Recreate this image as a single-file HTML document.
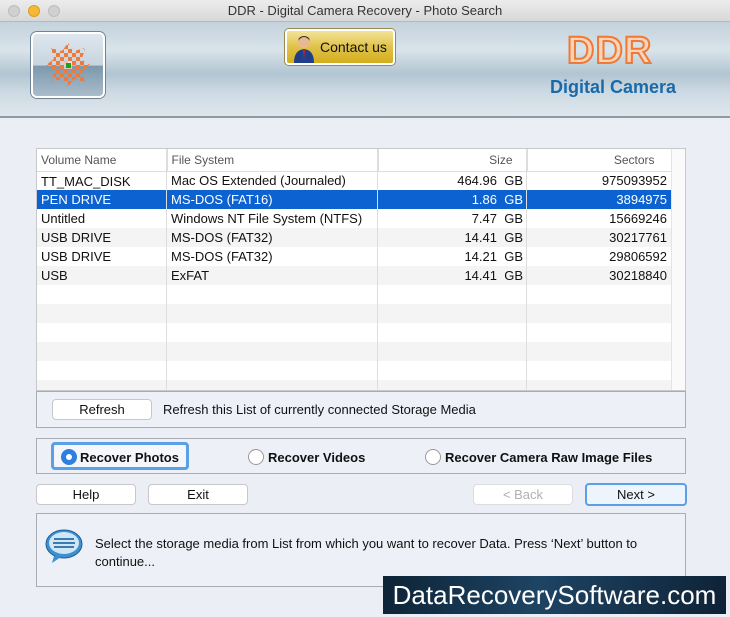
<!DOCTYPE html>
<html><head><meta charset="utf-8"><style>
*{margin:0;padding:0;box-sizing:border-box}
body{width:730px;height:617px;overflow:hidden;background:#eceef5;font-family:"Liberation Sans",sans-serif;font-size:13px;color:#111;position:relative}
.a{position:absolute}
.title{left:0;top:0;width:730px;height:22px;background:linear-gradient(#ececec,#d8d8d8);border-bottom:1px solid #b8b8b8;text-align:center;line-height:22px;font-size:13px;color:#333}
.dot{top:5px;width:12px;height:12px;border-radius:50%;background:#d0d0d0;border:1px solid #bcbcbc}
.hdr{left:0;top:22px;width:730px;height:96px;background:linear-gradient(180deg,#c3d2dc 0%,#d9e3ea 30%,#b2c5d2 55%,#cddae3 75%,#dfe6ec 100%);border-bottom:2px solid #8f9aa2}
.box{border:1px solid #a8acb4;background:#eef0f7}
.btn{background:#fff;border:1px solid #c8c8cc;border-radius:4px;text-align:center;line-height:19px;font-size:13px}
table{border-collapse:collapse;font-size:13px}
td{height:19px;padding:0 4px;white-space:nowrap}
.r{text-align:right}
</style></head><body>
<div class="a title">DDR - Digital Camera Recovery - Photo Search</div>
<div class="a dot" style="left:8px"></div>
<div class="a dot" style="left:28px;background:#f5b935;border-color:#d99f20"></div>
<div class="a dot" style="left:48px"></div>
<div class="a hdr"></div>
<div class="a" style="left:31px;top:32px;width:74px;height:66px;border:2px solid #fff;border-radius:6px;background:linear-gradient(#dfe7ee 0%,#c7d4de 50%,#7d99ad 52%,#a9bccb 100%);box-shadow:0 0 0 1px #6f8496"></div>
<svg class="a" style="left:44px;top:41px" width="48" height="48" viewBox="0 0 48 48">
<defs><pattern id="p" x="0" y="0" width="8" height="8" patternUnits="userSpaceOnUse"><rect width="4" height="4" fill="#f07a3c"/><rect x="4" y="4" width="4" height="4" fill="#f07a3c"/></pattern></defs>
<polygon points="24,2 30,10 41,7 38,18 46,24 38,30 41,41 30,38 24,46 18,38 7,41 10,30 2,24 10,18 7,7 18,10" fill="url(#p)"/>
<rect x="20" y="20" width="8" height="8" fill="#fff" opacity="0.5"/>
<rect x="22" y="22" width="5" height="5" fill="#1ea01e"/></svg>
<div class="a" style="left:285px;top:29px;width:110px;height:36px;border:2px solid #fff;border-radius:4px;background:linear-gradient(#f3e39a,#e0c24a 50%,#d3ae1c);box-shadow:0 0 0 1px #9a8a50"></div>
<svg class="a" style="left:292px;top:33px" width="24" height="30" viewBox="0 0 24 30"><circle cx="12" cy="9" r="6" fill="#e8b890"/><path d="M6 8 Q12 0 18 8 L17 5 Q12 1 7 5Z" fill="#333"/><path d="M2 30 Q2 17 12 16 Q22 17 22 30Z" fill="#1f3f8a"/><path d="M11 17 L12 27 L13 17Z" fill="#c22"/></svg>
<div class="a" style="left:320px;top:39px;font-size:14px;color:#111">Contact us</div>
<div class="a" style="left:567px;top:30px;font-size:38px;font-weight:bold;color:#fbd3b8;-webkit-text-stroke:2px #ee7a35;letter-spacing:1px">DDR</div>
<div class="a" style="left:550px;top:77px;font-size:18px;font-weight:bold;color:#1a6aaa">Digital Camera</div>

<div class="a" style="left:36px;top:148px;width:650px;height:243px;background:#fff;border:1px solid #c8c8cc;overflow:hidden">
<table style="width:634px;table-layout:fixed;color:#111">
<colgroup><col style="width:130px"><col style="width:211px"><col style="width:149px"><col style="width:144px"></colgroup>
<tr style="color:#555;font-size:12px;height:22px;border-bottom:1px solid #ddd"><td style="height:22px;border-right:1px solid #ddd">Volume Name</td><td style="border-right:1px solid #ddd">File System</td><td class="r" style="padding-right:14px;border-right:1px solid #ddd">Size</td><td class="r" style="padding-right:16px;border-right:1px solid #ddd">Sectors</td></tr>
<tr><td style="padding-top:1px">TT_MAC_DISK</td><td>Mac OS Extended (Journaled)</td><td class="r">464.96&nbsp; GB</td><td class="r">975093952</td></tr>
<tr style="background:#0b62d0;color:#fff"><td>PEN DRIVE</td><td>MS-DOS (FAT16)</td><td class="r">1.86&nbsp; GB</td><td class="r">3894975</td></tr>
<tr><td>Untitled</td><td>Windows NT File System (NTFS)</td><td class="r">7.47&nbsp; GB</td><td class="r">15669246</td></tr>
<tr style="background:#f4f4f4"><td>USB DRIVE</td><td>MS-DOS (FAT32)</td><td class="r">14.41&nbsp; GB</td><td class="r">30217761</td></tr>
<tr><td>USB DRIVE</td><td>MS-DOS (FAT32)</td><td class="r">14.21&nbsp; GB</td><td class="r">29806592</td></tr>
<tr style="background:#f4f4f4"><td>USB</td><td>ExFAT</td><td class="r">14.41&nbsp; GB</td><td class="r">30218840</td></tr>
<tr><td></td><td></td><td></td><td></td></tr>
<tr style="background:#f4f4f4"><td></td><td></td><td></td><td></td></tr>
<tr><td></td><td></td><td></td><td></td></tr>
<tr style="background:#f4f4f4"><td></td><td></td><td></td><td></td></tr>
<tr><td></td><td></td><td></td><td></td></tr>
<tr style="background:#f4f4f4"><td></td><td></td><td></td><td></td></tr>
</table>
<div class="a" style="left:129px;top:0;width:1px;height:243px;background:#ddd"></div>
<div class="a" style="left:340px;top:0;width:1px;height:243px;background:#ddd"></div>
<div class="a" style="left:489px;top:0;width:1px;height:243px;background:#ddd"></div>
<div class="a" style="left:634px;top:0;width:15px;height:243px;background:#fafafa;border-left:1px solid #e4e4e4"></div>
</div>

<div class="a box" style="left:36px;top:391px;width:650px;height:37px"></div>
<div class="a btn" style="left:52px;top:399px;width:100px;height:21px">Refresh</div>
<div class="a" style="left:163px;top:402px">Refresh this List of currently connected Storage Media</div>

<div class="a box" style="left:36px;top:438px;width:650px;height:36px"></div>
<div class="a" style="left:51px;top:442px;width:138px;height:28px;border:3px solid #5aa0e6;border-radius:4px;background:#f4f6fb"></div>
<div class="a" style="left:61px;top:449px;width:16px;height:16px;border-radius:50%;background:#2d7fe0"><div class="a" style="left:5px;top:5px;width:6px;height:6px;border-radius:50%;background:#fff"></div></div>
<div class="a" style="left:80px;top:450px;font-weight:bold">Recover Photos</div>
<div class="a" style="left:248px;top:449px;width:16px;height:16px;border-radius:50%;background:#fff;border:1px solid #999"></div>
<div class="a" style="left:268px;top:450px;font-weight:bold">Recover Videos</div>
<div class="a" style="left:425px;top:449px;width:16px;height:16px;border-radius:50%;background:#fff;border:1px solid #999"></div>
<div class="a" style="left:445px;top:450px;font-weight:bold">Recover Camera Raw Image Files</div>

<div class="a btn" style="left:36px;top:484px;width:100px;height:21px">Help</div>
<div class="a btn" style="left:148px;top:484px;width:100px;height:21px">Exit</div>
<div class="a btn" style="left:473px;top:484px;width:100px;height:21px;color:#b0b0b0;border-color:#ddd">&lt; Back</div>
<div class="a btn" style="left:585px;top:483px;width:102px;height:23px;border:2px solid #5aa0e6;background:#eef4fc;line-height:19px">Next &gt;</div>

<div class="a box" style="left:36px;top:513px;width:650px;height:74px"></div>
<svg class="a" style="left:44px;top:528px" width="40" height="36" viewBox="0 0 40 36"><ellipse cx="20" cy="16" rx="18" ry="14" fill="#3d8fd0" stroke="#1f5f98"/><ellipse cx="20" cy="15" rx="15" ry="11" fill="#cfe6f7"/><path d="M10 28 L8 35 L17 29Z" fill="#3d8fd0"/><path d="M10 11h20M9 15h22M10 19h20" stroke="#3d7ab0" stroke-width="2"/></svg>
<div class="a" style="left:95px;top:535px;width:585px;line-height:18px">Select the storage media from List from which you want to recover Data. Press ‘Next’ button to continue...</div>

<div class="a" style="left:383px;top:576px;width:343px;height:38px;background:linear-gradient(100deg,#0d2336,#1e4464 45%,#0e2235);color:#fff;font-size:26px;line-height:38px;text-align:center">DataRecoverySoftware.com</div>
</body></html>
